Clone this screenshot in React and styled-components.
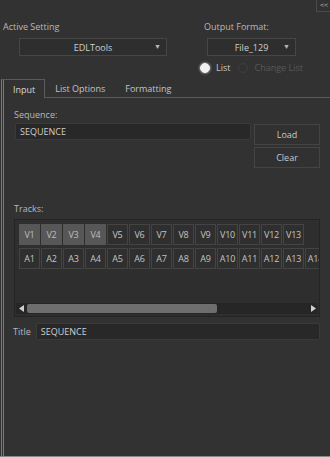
import React from "react";
import styled, { createGlobalStyle } from "styled-components";

const GlobalStyle = createGlobalStyle`
  html, body {
    margin: 0;
    padding: 0;
    background: #323232;
  }
`;

const videoTracks = ["V1", "V2", "V3", "V4", "V5", "V6", "V7", "V8", "V9", "V10", "V11", "V12", "V13"];
const audioTracks = ["A1", "A2", "A3", "A4", "A5", "A6", "A7", "A8", "A9", "A10", "A11", "A12", "A13", "A14"];
const selected = ["V1", "V2", "V3", "V4"];

const App = () => {
  return (
    <Window>
      <GlobalStyle />
      <TopBar>
        <CollapseButton>&lt;&lt;</CollapseButton>
      </TopBar>

      <SettingsRow>
        <SettingColumn>
          <Label>Active Setting</Label>
          <Dropdown $left={16} $width={148}>
            <span>EDLTools</span>
            <Arrow>▼</Arrow>
          </Dropdown>
        </SettingColumn>
        <SettingColumn $right>
          <Label>Output Format:</Label>
          <Dropdown $left={3} $width={89}>
            <span>File_129</span>
            <Arrow>▼</Arrow>
          </Dropdown>
          <RadioRow>
            <RadioOption>
              <RadioDot $checked />
              <RadioText>List</RadioText>
            </RadioOption>
            <RadioOption>
              <RadioDot />
              <RadioText $dim>Change List</RadioText>
            </RadioOption>
          </RadioRow>
        </SettingColumn>
      </SettingsRow>

      <TabBar>
        <Tab $active>Input</Tab>
        <Tab>List Options</Tab>
        <Tab>Formatting</Tab>
        <TabFill />
      </TabBar>

      <Panel>
        <Label>Sequence:</Label>
        <SequenceRow>
          <TextField $flex>SEQUENCE</TextField>
          <ButtonColumn>
            <Button>Load</Button>
            <Button>Clear</Button>
          </ButtonColumn>
        </SequenceRow>

        <TracksLabel>Tracks:</TracksLabel>
        <TrackBox>
          <TrackScroller>
            <TrackRow>
              {videoTracks.map((t) => (
                <TrackButton key={t} $on={selected.includes(t)}>
                  {t}
                </TrackButton>
              ))}
            </TrackRow>
            <TrackRow>
              {audioTracks.map((t) => (
                <TrackButton key={t}>{t}</TrackButton>
              ))}
            </TrackRow>
          </TrackScroller>
          <ScrollBar>
            <ScrollArrow>
              <svg width="6" height="7" viewBox="0 0 6 7">
                <path d="M5 0 L0 3.5 L5 7 Z" fill="#d0d0d0" />
              </svg>
            </ScrollArrow>
            <ScrollTrack>
              <ScrollThumb />
            </ScrollTrack>
            <ScrollArrow>
              <svg width="6" height="7" viewBox="0 0 6 7">
                <path d="M1 0 L6 3.5 L1 7 Z" fill="#d0d0d0" />
              </svg>
            </ScrollArrow>
          </ScrollBar>
        </TrackBox>

        <TitleRow>
          <TitleLabel>Title</TitleLabel>
          <TextField $flex>SEQUENCE</TextField>
        </TitleRow>
      </Panel>
    </Window>
  );
};

const Window = styled.div`
  width: 330px;
  height: 457px;
  box-sizing: border-box;
  background: #323232;
  border-bottom: 1px solid #8a8a8a;
  display: flex;
  flex-direction: column;
  font-family: "Open Sans", "Noto Sans", sans-serif;
  font-size: 9px;
  color: #c4c4c4;
  overflow: hidden;
`;

const TopBar = styled.div`
  display: flex;
  justify-content: flex-end;
  height: 14px;
`;

const CollapseButton = styled.div`
  width: 14px;
  height: 12px;
  box-sizing: border-box;
  border-left: 1px solid #4a4a4a;
  border-bottom: 1px solid #4a4a4a;
  font-family: "DejaVu Sans", sans-serif;
  font-size: 6px;
  line-height: 9px;
  letter-spacing: -1px;
  color: #b8b8b8;
  text-align: center;
`;

const SettingsRow = styled.div`
  display: flex;
  padding-top: 7px;
`;

const SettingColumn = styled.div`
  display: flex;
  flex-direction: column;
  padding-left: ${(p) => (p.$right ? "37px" : "3px")};
  width: ${(p) => (p.$right ? "auto" : "164px")};
`;

const Label = styled.div`
  font-size: 9px;
  line-height: 12px;
  color: #b8b8b8;
  white-space: nowrap;
`;

const Dropdown = styled.div`
  margin-top: 5px;
  margin-left: ${(p) => p.$left}px;
  width: ${(p) => p.$width}px;
  height: 18px;
  box-sizing: border-box;
  border: 1px solid #464646;
  background: #2e2e2e;
  position: relative;
  display: flex;
  align-items: center;
  justify-content: center;
  font-size: 9px;
  color: #cfcfcf;
`;

const Arrow = styled.span`
  position: absolute;
  right: 5px;
  top: 3px;
  font-size: 7px;
  color: #b8b8b8;
`;

const RadioRow = styled.div`
  display: flex;
  gap: 8px;
  margin-top: 6px;
  margin-left: -4px;
`;

const RadioOption = styled.div`
  display: flex;
  align-items: center;
  gap: 6px;
`;

const RadioDot = styled.div`
  width: 10px;
  height: 10px;
  border-radius: 50%;
  box-sizing: border-box;
  background: ${(p) => (p.$checked ? "#f2f2f2" : "transparent")};
  border: 1px solid ${(p) => (p.$checked ? "#f2f2f2" : "#3e3e3e")};
  box-shadow: ${(p) => (p.$checked ? "0 0 2px 1px rgba(200,200,200,0.5)" : "none")};
`;

const RadioText = styled.span`
  font-size: 9px;
  line-height: 12px;
  color: ${(p) => (p.$dim ? "#585858" : "#c8c8c8")};
`;

const TabBar = styled.div`
  display: flex;
  align-items: flex-end;
  margin-top: 5px;
  padding-left: 3px;
  height: 19px;
`;

const Tab = styled.div`
  height: ${(p) => (p.$active ? "19px" : "18px")};
  box-sizing: border-box;
  padding: ${(p) => (p.$active ? "0 9px 0 9px" : "0 10px")};
  display: flex;
  align-items: center;
  font-size: 9px;
  color: ${(p) => (p.$active ? "#d8d8d8" : "#c4c4c4")};
  border: ${(p) => (p.$active ? "1px solid #5a5a5a" : "none")};
  border-bottom: ${(p) => (p.$active ? "none" : "1px solid #5a5a5a")};
  border-left: ${(p) => (p.$active ? "3px double #7a7a7a" : "none")};
  margin-left: ${(p) => (p.$active ? "-2px" : "0")};
`;

const TabFill = styled.div`
  flex: 1;
  border-bottom: 1px solid #5a5a5a;
`;

const Panel = styled.div`
  flex: 1;
  margin-left: 1px;
  border-left: 3px double #7a7a7a;
  padding: 11px 10px 0 10px;
  display: flex;
  flex-direction: column;
`;

const SequenceRow = styled.div`
  display: flex;
  gap: 3px;
  margin-top: 2px;
  margin-left: 1px;
`;

const TextField = styled.div`
  flex: ${(p) => (p.$flex ? 1 : "none")};
  height: 17px;
  box-sizing: border-box;
  background: #282828;
  border: 1px solid #3a3a3a;
  border-radius: 2px;
  padding-left: 4px;
  display: flex;
  align-items: center;
  font-size: 9px;
  color: #cfcfcf;
`;

const ButtonColumn = styled.div`
  display: flex;
  flex-direction: column;
  gap: 2px;
  margin-top: 1px;
`;

const Button = styled.div`
  width: 66px;
  height: 21px;
  box-sizing: border-box;
  border: 1px solid #444444;
  background: #313131;
  display: flex;
  align-items: center;
  justify-content: center;
  font-size: 9px;
  color: #c8c8c8;
`;

const TracksLabel = styled(Label)`
  margin-top: 35px;
`;

const TrackBox = styled.div`
  margin-top: 4px;
  height: 98px;
  box-sizing: border-box;
  border: 1px solid #242424;
  background: #2e2e2e;
  display: flex;
  flex-direction: column;
`;

const TrackScroller = styled.div`
  flex: 1;
  overflow: hidden;
  padding: 4px 0 0 4px;
  display: flex;
  flex-direction: column;
  gap: 3px;
`;

const TrackRow = styled.div`
  display: flex;
  gap: 1px;
  flex-wrap: nowrap;
`;

const TrackButton = styled.div`
  flex: none;
  width: 21px;
  height: 21px;
  box-sizing: border-box;
  border: 1px solid ${(p) => (p.$on ? "#575757" : "#444444")};
  background: ${(p) => (p.$on ? "#575757" : "#2f2f2f")};
  display: flex;
  align-items: center;
  justify-content: center;
  font-size: 9px;
  letter-spacing: -0.2px;
  white-space: nowrap;
  color: ${(p) => (p.$on ? "#bdbdbd" : "#c4c4c4")};
`;

const ScrollBar = styled.div`
  display: flex;
  height: 11px;
  margin: 0 1px 2px 1px;
  background: #262626;
`;

const ScrollArrow = styled.div`
  width: 11px;
  display: flex;
  align-items: center;
  justify-content: center;
`;

const ScrollTrack = styled.div`
  flex: 1;
  display: flex;
  align-items: center;
`;

const ScrollThumb = styled.div`
  width: 190px;
  height: 9px;
  border-radius: 2px;
  background: #6e6e6e;
`;

const TitleRow = styled.div`
  display: flex;
  align-items: center;
  gap: 5px;
  margin-top: 6px;
`;

const TitleLabel = styled(Label)`
  margin-left: -1px;
`;

export default App;
